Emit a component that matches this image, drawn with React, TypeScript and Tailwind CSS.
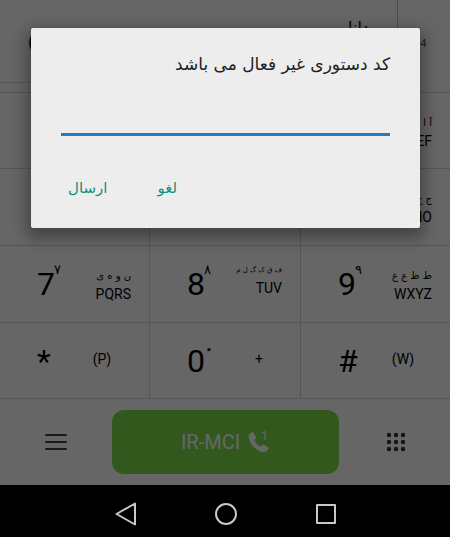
import { useState } from 'react';
import clsx from 'clsx';

type KeyProps = {
  digit: string;
  persian?: string;
  letters?: string;
  sub?: string;
  hint?: string;
  small?: boolean;
};

const keys: KeyProps[] = [
  { digit: '1' },
  { digit: '2' },
  { digit: '3', persian: '۳', sub: 'آ ا', letters: 'DEF' },
  { digit: '4' },
  { digit: '5' },
  { digit: '6', persian: '۶', sub: 'ج چ ح خ', letters: 'MNO' },
  { digit: '7', persian: '۷', sub: 'ن و ه ی', letters: 'PQRS' },
  { digit: '8', persian: '۸', sub: 'ف ق ک گ ل م', letters: 'TUV', small: true },
  { digit: '9', persian: '۹', sub: 'ط ظ ع غ', letters: 'WXYZ' },
  { digit: '*', hint: '(P)' },
  { digit: '0', persian: '۰', hint: '+' },
  { digit: '#', hint: '(W)' },
];

function Key({ digit, persian, letters, sub, hint, small }: KeyProps) {
  return (
    <button type="button" className="flex h-full w-full items-center pr-[18px] pl-[37px] text-black">
      <span className="flex w-[30px] shrink-0 items-start">
        <span className="text-[32px] leading-9">{digit}</span>
        {persian && (
          <span
            className={clsx(
              "-ml-px font-['DejaVu_Sans',sans-serif]",
              persian === '۰' ? 'text-base leading-3 font-bold' : 'text-[13px] leading-2',
            )}
          >
            {persian}
          </span>
        )}
      </span>
      {hint && (
        <span className={clsx('shrink-0 pb-1 text-center text-sm', hint === '+' ? 'w-[84px]' : 'w-[70px]')}>
          {hint}
        </span>
      )}
      {letters && (
        <span className={clsx('flex min-w-0 flex-1 flex-col items-end', small ? 'pb-2' : 'pt-1')}>
          <span
            dir="rtl"
            className={clsx(
              "font-['DejaVu_Sans',sans-serif] leading-4 whitespace-nowrap",
              small ? 'text-[7px]' : 'text-[10px]',
            )}
          >
            {sub}
          </span>
          <span className="text-sm leading-5">{letters}</span>
        </span>
      )}
    </button>
  );
}

function DialPad() {
  return (
    <div className="grid grid-cols-[minmax(0,150fr)_minmax(0,151fr)_minmax(0,149fr)] border-t border-[#d8d8d8]">
      {keys.map((key, i) => (
        <div
          key={key.digit}
          className={clsx(
            'border-b border-[#d8d8d8]',
            i % 3 !== 2 && 'border-r',
            i > 2 && i < 9 ? 'h-[77px]' : 'h-[76px]',
          )}
        >
          <Key {...key} />
        </div>
      ))}
    </div>
  );
}

function Suggestion() {
  return (
    <div className="flex h-[92px]">
      <div className="flex h-[83px] flex-1 items-start justify-between border-b border-[#d8d8d8] pt-4 pr-7 pl-7">
        <span className="pt-3 text-lg text-black">(۱)</span>
        <span dir="rtl" className="font-['DejaVu_Sans',sans-serif] text-base text-black">
          دانا
        </span>
      </div>
      <div className="w-[53px] border-l border-[#c0c0c0] pt-9 pl-4 text-[11px] text-[#555]">
        <span>14</span>
      </div>
    </div>
  );
}

function CallBar() {
  return (
    <div className="flex h-[86px] items-center justify-between">
      <button type="button" aria-label="Menu" className="flex w-28 justify-center">
        <svg width="24" height="20" viewBox="0 0 24 20" stroke="#444" strokeWidth="2" strokeLinecap="round">
          <path d="M2 3h20M2 10h20M2 17h20" />
        </svg>
      </button>
      <button
        type="button"
        className="flex h-16 flex-1 items-center justify-center gap-2 rounded-xl bg-[#7fdc4d] text-xl text-white"
      >
        <span>IR-MCI</span>
        <span className="relative flex">
          <svg width="22" height="22" viewBox="0 0 24 24" fill="currentColor">
            <path d="M2.2 2.6C3.3 1.6 5.1 1 6 1.8l2.6 4.6c.5 1-.1 1.7-.9 2.5-.8.7-.9 1.2-.4 2.1 1.3 2.3 3.1 4.2 5.4 5.5.9.5 1.4.3 2.1-.5.8-.9 1.5-1.4 2.5-.9l4.6 2.500c.9.6.7 1.7.1 2.7-1.4 2.3-4.3 3.3-7.4 2.3C8.2 20.6 3.3 15.5 1.2 9.2.4 6.6.5 4.2 2.2 2.600z" />
          </svg>
          <span className="absolute -top-px right-0.5 text-xs leading-3">1</span>
        </span>
      </button>
      <button type="button" aria-label="Dial pad" className="flex w-[111px] justify-center pl-0.5">
        <svg width="20" height="20" viewBox="0 0 20 20" fill="#333">
          {[3, 10, 17].map((y) => [3, 10, 17].map((x) => <circle key={`${x}-${y}`} cx={x} cy={y} r="2.2" />))}
        </svg>
      </button>
    </div>
  );
}

function NavBar() {
  return (
    <nav className="flex h-[52px] items-center justify-center gap-[76px] bg-black pt-1.5 pl-0.5 text-[#c8c8c8]">
      <button type="button" aria-label="Back">
        <svg width="24" height="24" viewBox="0 0 24 24" fill="none" stroke="currentColor" strokeWidth="2" strokeLinejoin="round">
          <path d="M21 1.500v21L2.500 12z" />
        </svg>
      </button>
      <button type="button" aria-label="Home">
        <svg width="24" height="24" viewBox="0 0 24 24" fill="none" stroke="currentColor" strokeWidth="2">
          <circle cx="12" cy="12" r="10" />
        </svg>
      </button>
      <button type="button" aria-label="Recent apps">
        <svg width="24" height="24" viewBox="0 0 24 24" fill="none" stroke="currentColor" strokeWidth="2" strokeLinejoin="round">
          <path d="M3 3h18v18H3z" />
        </svg>
      </button>
    </nav>
  );
}

function UssdDialog() {
  const [reply, setReply] = useState('');

  return (
    <div
      role="dialog"
      aria-labelledby="ussd-message"
      className="absolute top-7 right-[30px] left-[31px] rounded-xs bg-[#ededed] px-[30px] pt-5 pb-6 font-['DejaVu_Sans',sans-serif] shadow-[0_6px_16px_4px_rgba(0,0,0,0.35)]"
    >
      <label id="ussd-message" htmlFor="ussd-reply" dir="rtl" className="block text-[17px] leading-8 text-[#212121]">
        کد دستوری غیر فعال می باشد
      </label>
      <input
        id="ussd-reply"
        dir="rtl"
        value={reply}
        onChange={(e) => setReply(e.target.value)}
        className="mt-5 block h-9 w-full border-b-[3px] border-[#1f7fc0] bg-transparent text-lg text-[#212121] outline-none"
      />
      <div className="mt-9 flex gap-[50px] pl-[7px] text-[15px] leading-8 text-[#12907c]">
        <button type="button">ارسال</button>
        <button type="button">لغو</button>
      </div>
    </div>
  );
}

export default function App() {
  return (
    <div className="font-[Roboto,sans-serif]">
      <main className="relative overflow-hidden bg-white">
        <Suggestion />
        <DialPad />
        <CallBar />
        <div className="absolute inset-0 bg-black/60" />
        <UssdDialog />
      </main>
      <NavBar />
    </div>
  );
}
